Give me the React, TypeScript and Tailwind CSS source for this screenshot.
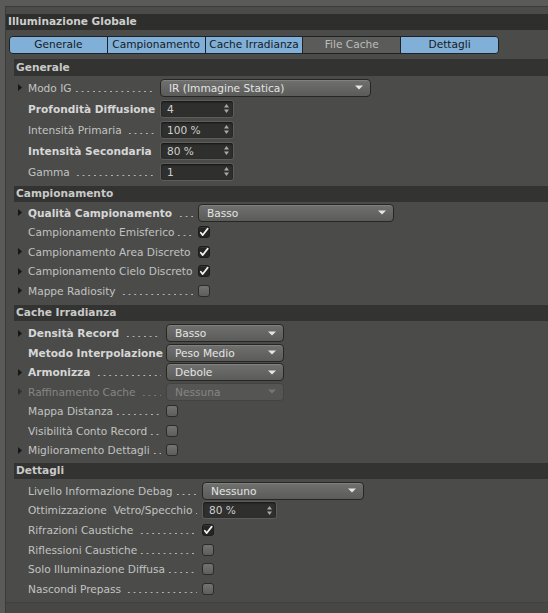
import React from "react";

function Tri({ dim }: { dim?: boolean }) {
  return (
    <svg width="4" height="7" viewBox="0 0 4 7" className="block">
      <path d="M0 0L4 3.5L0 7Z" fill={dim ? "#2e2e2e" : "#161616"} />
    </svg>
  );
}

function Caret({ dim }: { dim?: boolean }) {
  return (
    <svg width="8" height="5" viewBox="0 0 8 5" className="block">
      <path d="M0 0.5H8L4 4.5Z" fill={dim ? "#767775" : "#e6e6e6"} />
    </svg>
  );
}

function Spin() {
  return (
    <svg width="5" height="9" viewBox="0 0 5 9" className="block">
      <path d="M2.5 0L5 3.5H0Z" fill="#a8a8a8" />
      <path d="M2.5 9L5 5.5H0Z" fill="#a8a8a8" />
    </svg>
  );
}

function Dropdown({ value, w, disabled }: { value: string; w: string; disabled?: boolean }) {
  return (
    <div
      className={
        w +
        " h-[18px] rounded-[4px] border flex items-center justify-between pl-[8px] pr-[7px] " +
        (disabled
          ? "border-[#434442] bg-[#555654] text-[#858684]"
          : "border-[#262725] bg-gradient-to-b from-[#70716f] to-[#5b5c5a] text-[#e4e4e4] shadow-[inset_0_1px_0_rgba(255,255,255,0.12)]")
      }
    >
      <span className="leading-[16px] whitespace-nowrap">{value}</span>
      <Caret dim={disabled} />
    </div>
  );
}

function NumField({ value, w }: { value: string; w: string }) {
  return (
    <div
      className={
        w +
        " h-[18px] rounded-[3px] border border-[#5d5e5c] bg-[#2f302e] flex items-center justify-between pl-[6px] pr-[4px] text-[#cfcfcf] shadow-[inset_0_1px_2px_rgba(0,0,0,0.6)]"
      }
    >
      <span className="leading-[16px] whitespace-nowrap">{value}</span>
      <Spin />
    </div>
  );
}

function Check({ on }: { on?: boolean }) {
  return on ? (
    <div className="w-[12px] h-[12px] rounded-[3px] bg-[#252624] border border-[#1c1c1b] flex items-center justify-center shadow-[inset_0_1px_0_rgba(255,255,255,0.08)]">
      <svg width="11" height="10" viewBox="0 0 11 10" className="block">
        <path d="M2 5.8 L4.1 8.4 L9.6 1.3" fill="none" stroke="#f2f2f2" strokeWidth="1.9" strokeLinecap="round" strokeLinejoin="round" />
      </svg>
    </div>
  ) : (
    <div className="w-[12px] h-[12px] rounded-[3px] border border-[#2b2c2a] bg-gradient-to-b from-[#737472] to-[#5e5f5d]" />
  );
}

function Row({
  label,
  bold,
  tri,
  disabled,
  lw,
  h,
  children,
}: {
  label: string;
  bold?: boolean;
  tri?: boolean;
  disabled?: boolean;
  lw: string;
  h: string;
  children: React.ReactNode;
}) {
  const color = disabled ? "text-[#858684]" : bold ? "text-[#d6d6d6]" : "text-[#c2c3c1]";
  const dots = disabled
    ? "bg-[radial-gradient(circle,#7a7b79_0.75px,transparent_1.05px)]"
    : "bg-[radial-gradient(circle,#b4b5b3_0.75px,transparent_1.05px)]";
  return (
    <div className={"flex items-center " + h}>
      <div className="w-[14px] pl-[4px] flex items-center">{tri && <Tri dim={disabled} />}</div>
      <div className={lw + " flex items-center whitespace-pre " + color}>
        <span className={"shrink-0 leading-[16px] " + (bold ? "font-bold" : "")}>{label}</span>
        <span className={"flex-1 min-w-0 h-[3px] mt-[7px] ml-[2px] bg-repeat-x bg-[length:5.7px_3px] " + dots} />
      </div>
      <div className="ml-[5px] flex items-center">{children}</div>
    </div>
  );
}

function Header({ title, cls }: { title: string; cls: string }) {
  return (
    <div className={"ml-[8px] bg-[#333432] flex items-center pl-[2px] font-bold text-[#c9cac8] " + cls}>
      {title}
    </div>
  );
}

export default function App() {
  const tabs = [
    { t: "Generale", on: true },
    { t: "Campionamento", on: true },
    { t: "Cache Irradianza", on: true },
    { t: "File Cache", on: false },
    { t: "Dettagli", on: true },
  ];
  return (
    <div className="w-[548px] h-[613px] bg-[#5a5b59] pt-[6px] pl-[5px] font-['DejaVu_Sans',sans-serif] text-[10.6px] overflow-hidden">
      <div className="h-full border-l border-t border-[#3b3c3a] bg-[#4b4c4a] flex flex-col">
        <div className="mt-[7px] h-[16px] bg-[#2e2f2d] flex items-center pl-[2px] font-bold text-[#cdcecc]">
          Illuminazione Globale
        </div>
        <div className="mt-[6px] ml-[3px] w-[490px] h-[18px] rounded-[4px] border border-[#1e2226] overflow-hidden flex">
          {tabs.map((tb, i) => (
            <div
              key={tb.t}
              className={
                "flex-1 flex items-center justify-center whitespace-nowrap " +
                (i > 0 ? "border-l border-[#1e2226] " : "") +
                (tb.on ? "bg-[#80b0d8] text-[#151a1f]" : "bg-[#5b5c5a] text-[#bcbdbb]")
              }
            >
              {tb.t}
            </div>
          ))}
        </div>

        <Header title="Generale" cls="mt-[5px] h-[17px]" />
        <div className="pt-[1px] ml-[8px]">
          <Row label="Modo IG" tri lw="w-[127px]" h="h-[21px]">
            <Dropdown value="IR (Immagine Statica)" w="w-[211px]" />
          </Row>
          <Row label="Profondità Diffusione" bold lw="w-[127px]" h="h-[21px]">
            <NumField value="4" w="w-[74px]" />
          </Row>
          <Row label="Intensità Primaria " lw="w-[127px]" h="h-[21px]">
            <NumField value="100 %" w="w-[74px]" />
          </Row>
          <Row label="Intensità Secondaria" bold lw="w-[127px]" h="h-[21px]">
            <NumField value="80 %" w="w-[74px]" />
          </Row>
          <Row label="Gamma " lw="w-[127px]" h="h-[21px]">
            <NumField value="1" w="w-[74px]" />
          </Row>
        </div>

        <Header title="Campionamento" cls="mt-[4px] h-[16px]" />
        <div className="pt-[1px] ml-[8px]">
          <Row label="Qualità Campionamento " bold tri lw="w-[165px]" h="h-[19.5px]">
            <Dropdown value="Basso" w="w-[196px]" />
          </Row>
          <Row label="Campionamento Emisferico" lw="w-[165px]" h="h-[19.5px]">
            <Check on />
          </Row>
          <Row label="Campionamento Area Discreto" tri lw="w-[165px]" h="h-[19.5px]">
            <Check on />
          </Row>
          <Row label="Campionamento Cielo Discreto" tri lw="w-[165px]" h="h-[19.5px]">
            <Check on />
          </Row>
          <Row label="Mappe Radiosity " tri lw="w-[165px]" h="h-[19.5px]">
            <Check />
          </Row>
        </div>

        <Header title="Cache Irradianza" cls="mt-[4.5px] h-[16px]" />
        <div className="pt-[2.5px] ml-[8px]">
          <Row label="Densità Record " bold tri lw="w-[133px]" h="h-[19.5px]">
            <Dropdown value="Basso" w="w-[118px]" />
          </Row>
          <Row label="Metodo Interpolazione" bold lw="w-[133px]" h="h-[19.5px]">
            <Dropdown value="Peso Medio" w="w-[118px]" />
          </Row>
          <Row label="Armonizza " bold tri lw="w-[133px]" h="h-[19.5px]">
            <Dropdown value="Debole" w="w-[118px]" />
          </Row>
          <Row label="Raffinamento Cache " tri disabled lw="w-[133px]" h="h-[19.5px]">
            <Dropdown value="Nessuna" w="w-[118px]" disabled />
          </Row>
          <Row label="Mappa Distanza" lw="w-[133px]" h="h-[19.5px]">
            <Check />
          </Row>
          <Row label="Visibilità Conto Record" lw="w-[133px]" h="h-[19.5px]">
            <Check />
          </Row>
          <Row label="Miglioramento Dettagli" tri lw="w-[133px]" h="h-[19.5px]">
            <Check />
          </Row>
        </div>

        <Header title="Dettagli" cls="mt-[3px] h-[16px]" />
        <div className="pt-[2px] ml-[8px]">
          <Row label="Livello Informazione Debag" lw="w-[169px]" h="h-[19.6px]">
            <Dropdown value="Nessuno" w="w-[162px]" />
          </Row>
          <Row label="Ottimizzazione  Vetro/Specchio" lw="w-[169px]" h="h-[19.6px]">
            <NumField value="80 %" w="w-[75px]" />
          </Row>
          <Row label="Rifrazioni Caustiche " lw="w-[169px]" h="h-[19.6px]">
            <Check on />
          </Row>
          <Row label="Riflessioni Caustiche" lw="w-[169px]" h="h-[19.6px]">
            <Check />
          </Row>
          <Row label="Solo Illuminazione Diffusa" lw="w-[169px]" h="h-[19.6px]">
            <Check />
          </Row>
          <Row label="Nascondi Prepass " lw="w-[169px]" h="h-[19.6px]">
            <Check />
          </Row>
        </div>
        <div className="flex-1" />
        <div className="h-[11px] border-t border-[#40413f] bg-[#474846]" />
      </div>
    </div>
  );
}
